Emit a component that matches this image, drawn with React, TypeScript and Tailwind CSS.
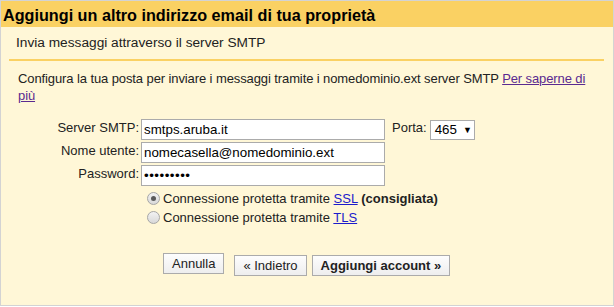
import React from "react";

function Radio({ checked }: { checked?: boolean }) {
  return (
    <span className="flex h-[13px] w-[13px] shrink-0 items-center justify-center rounded-full border border-[#a6a6a6] bg-gradient-to-b from-[#f2f2f2] to-[#d9d9d9]">
      {checked && <span className="h-[5px] w-[5px] rounded-full bg-[#5a5a5a]" />}
    </span>
  );
}

function Btn({ children, bold }: { children: React.ReactNode; bold?: boolean }) {
  return (
    <button
      className={
        "h-[21px] border border-[#ababab] bg-gradient-to-b from-[#fdfdfd] to-[#eeeeee] px-[8px] text-[13px] leading-[19px] text-[#222] " +
        (bold ? "font-bold" : "")
      }
    >
      {children}
    </button>
  );
}

export default function App() {
  return (
    <div className="h-[307px] w-[614px] bg-white font-['Liberation_Sans',Arial,sans-serif]">
      <div className="h-[306px] w-[614px] border border-[#d3d3d3] bg-[#fff7d7]">
        <div className="h-[26px] bg-[#fad163] px-[2px] pt-[2px] text-[16.2px] font-bold leading-[24px] text-black">
          Aggiungi un altro indirizzo email di tua proprietà
        </div>
        <div className="ml-[8px] mr-[9px] border-b-2 border-[#fad163] pb-[8px] pl-[7px] pt-[8px] text-[13.7px] leading-[16px] text-[#222]">
          Invia messaggi attraverso il server SMTP
        </div>
        <p className="ml-[17px] mr-[12px] mt-[9px] text-[13px] leading-[17px] tracking-[-0.1px] text-[#222]">
          Configura la tua posta per inviare i messaggi tramite i nomedominio.ext server SMTP{" "}
          <a className="text-[#5a2a90] underline">Per saperne di più</a>
        </p>
        <div className="mt-[15px] flex flex-col gap-[2px] text-[13px] text-[#222]">
          <div className="flex h-[21px] items-start">
            <div className="w-[138px] pt-[1px] text-right leading-[16px]">Server SMTP:</div>
            <div className="ml-[2px] h-[21px] w-[244px] border border-[#ababab] bg-white pl-[2px] text-[13.33px] leading-[19px] text-black">
              smtps.aruba.it
            </div>
            <div className="ml-[7px] pt-[1px] leading-[16px]">Porta:</div>
            <div className="ml-[3px] mt-[1px] flex h-[20px] w-[45px] items-center border border-[#ababab] bg-white pl-[4px] text-[13.33px] leading-[18px] text-black">
              <span>465</span>
              <span className="ml-[6px] text-[9px] leading-[18px]">▼</span>
            </div>
          </div>
          <div className="flex h-[21px] items-start">
            <div className="w-[138px] pt-[1px] text-right leading-[16px]">Nome utente:</div>
            <div className="ml-[2px] h-[21px] w-[244px] border border-[#ababab] bg-white pl-[2px] text-[13.33px] leading-[19px] text-black">
              nomecasella@nomedominio.ext
            </div>
          </div>
          <div className="flex h-[21px] items-start">
            <div className="w-[138px] pt-[1px] text-right leading-[16px]">Password:</div>
            <div className="ml-[2px] h-[21px] w-[244px] border border-[#ababab] bg-white pl-[2px] text-[13.33px] leading-[19px] text-black">
              <span className="tracking-[0.5px]">•••••••••</span>
            </div>
          </div>
        </div>
        <div className="ml-[146px] mt-[3px] flex flex-col text-[13px] leading-[19px] text-[#222]">
          <div className="flex h-[19px] items-center">
            <Radio checked />
            <span className="ml-[3px]">
              Connessione protetta tramite <a className="text-[#1c1ccc] underline">SSL</a>{" "}
              <b>(consigliata)</b>
            </span>
          </div>
          <div className="flex h-[19px] items-center">
            <Radio />
            <span className="ml-[3px]">
              Connessione protetta tramite <a className="text-[#1c1ccc] underline">TLS</a>
            </span>
          </div>
        </div>
        <div className="ml-[162px] mt-[26px] flex">
          <Btn>Annulla</Btn>
          <div className="ml-[10px]">
            <Btn>« Indietro</Btn>
          </div>
          <div className="ml-[5px]">
            <Btn bold>Aggiungi account »</Btn>
          </div>
        </div>
      </div>
    </div>
  );
}
